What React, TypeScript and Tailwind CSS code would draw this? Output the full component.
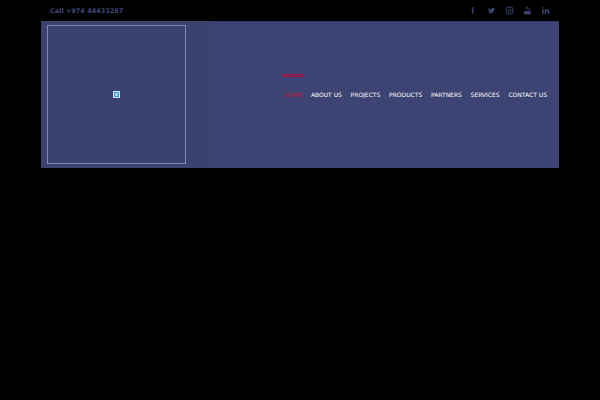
const socials = [
  { label: "facebook", d: "M14 3h-2.500C9.600 3 8.500 4.300 8.500 6.200V9H6v3h2.500v9h3v-9H14l.5-3h-3V6.500c0-.7.3-1 1-1H14z" },
  { label: "twitter", d: "M21 6.500c-.7.3-1.400.5-2.100.6.8-.5 1.300-1.200 1.600-2-.7.4-1.500.7-2.300.9A3.700 3.700 0 0 0 11.900 9.300 10.500 10.500 0 0 1 4.300 5.400a3.700 3.700 0 0 0 1.100 4.900c-.6 0-1.200-.2-1.700-.5 0 1.800 1.300 3.300 3 3.700-.5.100-1.100.2-1.700.1.500 1.500 1.800 2.500 3.500 2.600A7.500 7.500 0 0 1 3 17.700 10.500 10.500 0 0 0 19.200 8.400c.7-.5 1.300-1.100 1.800-1.900z" },
];

const navItems = ["ABOUT US", "PROJECTS", "PRODUCTS", "PARTNERS", "SERVICES", "CONTACT US"];

export default function App() {
  return (
    <div className="h-[400px] w-[600px] overflow-hidden bg-black font-['DejaVu_Sans',sans-serif]">
      {/* top bar */}
      <div className="flex h-[21px] items-center justify-between pl-[50px] pr-[50px]">
        <span className="mt-[2px] text-[6.500px] font-bold text-[#3f4674]">Call +974 44433287</span>
        <div className="flex items-center gap-[9px] text-[#3f4674]">
          {socials.map((s) => (
            <svg key={s.label} viewBox="0 0 24 24" className="h-[9px] w-[9px]" fill="currentColor">
              <path d={s.d} />
            </svg>
          ))}
          <svg viewBox="0 0 24 24" className="h-[9px] w-[9px]" fill="none" stroke="currentColor" strokeWidth="2.500">
            <rect x="3" y="3" width="18" height="18" rx="5" />
            <circle cx="12" cy="12" r="4" />
          </svg>
          <svg viewBox="0 0 24 24" className="h-[9px] w-[9px]" fill="currentColor">
            <path d="M8 1l2 5 2-5h1.800l-2.900 7v4H9.200V8L6.200 1zM14 5h1.600v5h1.800V5H19v7h-3.400zM3 14h18v8H3z" />
          </svg>
          <svg viewBox="0 0 24 24" className="h-[9px] w-[9px]" fill="currentColor">
            <path d="M3 9h4v12H3zM5 3a2.200 2.200 0 1 1 0 4.400A2.200 2.200 0 0 1 5 3zM10 9h3.800v1.700c.7-1.200 2-2 3.700-2 3.200 0 4.500 2 4.500 5.300v7h-4v-6.200c0-1.500-.5-2.600-1.900-2.600-1.500 0-2.100 1.100-2.100 2.600V21h-4z" />
          </svg>
        </div>
      </div>

      {/* header */}
      <div className="ml-[41px] flex h-[147px] w-[518px] items-center bg-[#3d4473] shadow-[inset_0_1px_0_#343b68]">
        <div className="flex h-full w-[173px] shrink-0 items-center bg-[#3b4270] pl-[6px]">
          <div className="flex h-[139px] w-[139px] items-center justify-center border border-[#8288b4]">
            <div className="flex h-[7px] w-[7px] items-center justify-center border border-[#cfe3f4] bg-[#3f9bd0]">
              <div className="h-[3px] w-[3px] bg-[#a5d3ea]" />
            </div>
          </div>
        </div>

        <div className="relative ml-[70px]">
          <span className="absolute left-[-2px] top-[-16px] h-[3px] w-[22px] bg-[#8f1c4b]" />
          <nav className="flex items-center gap-[8.700px] whitespace-nowrap text-[6px] text-white">
            <span className="text-[#c0143c]">HOME</span>
            {navItems.map((item) => (
              <span key={item}>{item}</span>
            ))}
          </nav>
        </div>
      </div>
    </div>
  );
}
